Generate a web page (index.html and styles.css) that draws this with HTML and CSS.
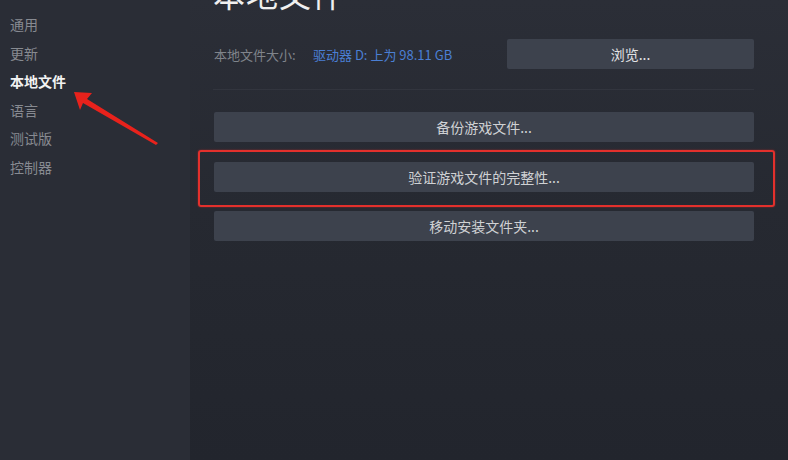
FILE: index.html
```html
<!DOCTYPE html>
<html lang="zh-CN">
<head>
<meta charset="utf-8">
<title>本地文件</title>
<link rel="stylesheet" href="styles.css">
</head>
<body>
<div class="app">
  <nav class="sidebar">
    <div class="nav-item">通用</div>
    <div class="nav-item">更新</div>
    <div class="nav-item active">本地文件</div>
    <div class="nav-item">语言</div>
    <div class="nav-item">测试版</div>
    <div class="nav-item">控制器</div>
  </nav>
  <main class="main">
    <h1 class="title">本地文件</h1>
    <div class="info-row">
      <span class="info-label">本地文件大小:</span>
      <span class="info-value">驱动器 D: 上为 98.11 GB</span>
      <button class="btn btn-browse">浏览...</button>
    </div>
    <div class="separator"></div>
    <div class="actions">
      <button class="btn">备份游戏文件...</button>
      <button class="btn">验证游戏文件的完整性...</button>
      <button class="btn">移动安装文件夹...</button>
    </div>
  </main>
  <div class="highlight-box"></div>
  <svg class="arrow" width="100" height="70" viewBox="70 88 100 70">
    <polygon points="74,92 92,93 87,99 158,143 156,145 83,103 80,110" fill="#e8221c"/>
  </svg>
</div>
</body>
</html>
```

FILE: styles.css
```css
* { box-sizing: border-box; }
html, body { margin: 0; padding: 0; }
body {
  width: 788px;
  height: 460px;
  overflow: hidden;
  font-family: "Noto Sans CJK SC", "Noto Sans", sans-serif;
  background: #252830;
}
.app {
  position: relative;
  display: flex;
  width: 788px;
  height: 460px;
}
.sidebar {
  width: 190px;
  flex: none;
  background: #2a2d36;
  padding-top: 10px;
  padding-left: 10px;
}
.nav-item {
  font-size: 14px;
  line-height: 28.6px;
  color: #878a91;
}
.nav-item.active {
  color: #f2f2f2;
  font-weight: 700;
}
.main {
  flex: 1;
  background: linear-gradient(180deg, #2b2e37 0%, #262931 45%, #22252d 100%);
  padding-left: 23px;
  padding-right: 35px;
}
.title {
  margin: -23px 0 0 0;
  font-size: 32px;
  line-height: 32px;
  font-weight: 400;
  color: #f0f0f0;
  letter-spacing: 1px;
}
.info-row {
  display: flex;
  align-items: center;
  margin-top: 30px;
  padding-left: 1px;
}
.info-label {
  font-size: 13px;
  color: #80848b;
  width: 99px;
}
.info-value {
  font-size: 13px;
  color: #4a7fd4;
}
.btn {
  display: block;
  height: 30px;
  border: none;
  border-radius: 2px;
  background: #3d424d;
  color: #cfd1d4;
  font-family: "Noto Sans CJK SC", "Noto Sans", sans-serif;
  font-size: 14px;
  padding: 0;
}
.btn-browse {
  margin-left: auto;
  width: 247px;
  color: #e2e3e5;
}
.separator {
  height: 1px;
  background: #32353e;
  margin-top: 20px;
}
.actions {
  display: flex;
  flex-direction: column;
  gap: 19.5px;
  margin-top: 22px;
  padding-left: 1px;
}
.actions .btn { width: 540px; }
.highlight-box {
  position: absolute;
  left: 198px;
  top: 150px;
  width: 577px;
  height: 57px;
  border: 2.5px solid #e3302c;
  border-radius: 3px;
  box-shadow: 0 0 2px rgba(227, 48, 44, 0.6);
}
.arrow {
  position: absolute;
  left: 70px;
  top: 88px;
}
```
